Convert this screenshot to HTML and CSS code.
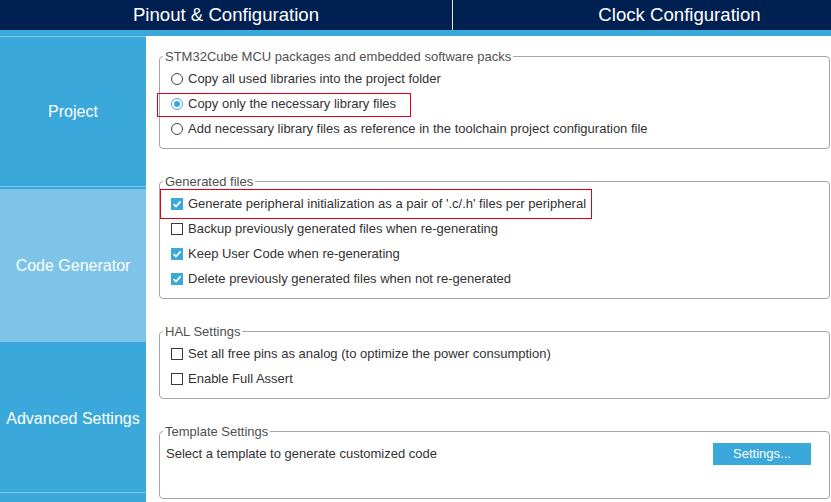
FILE: index.html
```html
<!DOCTYPE html>
<html>
<head>
<meta charset="utf-8">
<link rel="stylesheet" href="styles.css">
</head>
<body>
<div class="app">
  <header class="topbar">
    <div class="tab tab-first">Pinout &amp; Configuration</div>
    <div class="tab">Clock Configuration</div>
  </header>
  <div class="strip"></div>
  <div class="main">
    <nav class="side">
      <div class="nav-item nav-first">Project</div>
      <div class="nav-item nav-active">Code Generator</div>
      <div class="nav-item nav-last">Advanced Settings</div>
    </nav>
    <section class="content">
      <fieldset class="group">
        <legend>STM32Cube MCU packages and embedded software packs</legend>
        <div class="row"><span class="rb"></span><span>Copy all used libraries into the project folder</span></div>
        <div class="row"><span class="rb on"></span><span>Copy only the necessary library files</span><span class="mark mark-1"></span></div>
        <div class="row"><span class="rb"></span><span>Add necessary library files as reference in the toolchain project configuration file</span></div>
      </fieldset>

      <fieldset class="group">
        <legend>Generated files</legend>
        <div class="row"><span class="cb on"><svg width="12" height="12" viewBox="0 0 12 12"><path d="M2.6 6.2 L5 8.6 L9.6 3.4" stroke="#fff" stroke-width="1.7" fill="none"/></svg></span><span>Generate peripheral initialization as a pair of '.c/.h' files per peripheral</span><span class="mark mark-2"></span></div>
        <div class="row"><span class="cb"></span><span>Backup previously generated files when re-generating</span></div>
        <div class="row"><span class="cb on"><svg width="12" height="12" viewBox="0 0 12 12"><path d="M2.6 6.2 L5 8.6 L9.6 3.4" stroke="#fff" stroke-width="1.7" fill="none"/></svg></span><span>Keep User Code when re-generating</span></div>
        <div class="row"><span class="cb on"><svg width="12" height="12" viewBox="0 0 12 12"><path d="M2.6 6.2 L5 8.6 L9.6 3.4" stroke="#fff" stroke-width="1.7" fill="none"/></svg></span><span>Delete previously generated files when not re-generated</span></div>
      </fieldset>

      <fieldset class="group">
        <legend>HAL Settings</legend>
        <div class="row"><span class="cb"></span><span>Set all free pins as analog (to optimize the power consumption)</span></div>
        <div class="row"><span class="cb"></span><span>Enable Full Assert</span></div>
      </fieldset>

      <fieldset class="group group-tpl">
        <legend>Template Settings</legend>
        <div class="row row-tpl"><span>Select a template to generate customized code</span><span class="btn">Settings...</span></div>
      </fieldset>
    </section>
  </div>
</div>
</body>
</html>
```
FILE: styles.css
```css
html, body {
  margin: 0;
  padding: 0;
  background: #ffffff;
  overflow: hidden;
}
.app {
  width: 831px;
  height: 502px;
  overflow: hidden;
  font-family: "Liberation Sans", Arial, sans-serif;
  display: flex;
  flex-direction: column;
}
.topbar {
  height: 30px;
  background: #012052;
  display: flex;
  overflow: hidden;
  flex: none;
}
.tab {
  flex: none;
  width: 453px;
  box-sizing: border-box;
  color: #ffffff;
  font-size: 18.6px;
  line-height: 29px;
  text-align: center;
}
.tab-first {
  border-right: 1px solid #e8ecf2;
}
.strip {
  height: 6px;
  background: #3aa8db;
  flex: none;
}
.main {
  flex: 1;
  display: flex;
  min-height: 0;
}
.side {
  width: 146px;
  flex: none;
  background: #3aa8db;
  display: flex;
  flex-direction: column;
}
.nav-item {
  color: #ffffff;
  font-size: 16px;
  display: flex;
  align-items: center;
  justify-content: center;
  padding-top: 1px;
  box-sizing: border-box;
}
.nav-first {
  height: 151px;
  border-top: 1px solid #86c8ea;
  border-bottom: 1px solid #86c8ea;
  margin-bottom: 2px;
}
.nav-active {
  height: 153px;
  background: #7dc4e8;
}
.nav-last {
  height: 151px;
  padding-top: 3px;
  border-bottom: 1px solid #86c8ea;
}
.content {
  flex: 1;
  padding: 13px 1px 0 13px;
  display: flex;
  flex-direction: column;
  gap: 25px;
  color: #333333;
  font-size: 13px;
}
.group {
  margin: 0;
  min-width: 0;
  border: 1px solid #a3a6aa;
  border-radius: 4px;
  padding: 2px 0 7px 11px;
}
.group legend {
  margin-left: -8px;
  padding: 0 2px;
  font-size: 13px;
  line-height: 15px;
  color: #505050;
}
.group-tpl {
  padding-bottom: 32px;
}
.row {
  position: relative;
  height: 25px;
  display: flex;
  align-items: center;
  gap: 5px;
  line-height: 25px;
  white-space: nowrap;
}
.row-tpl {
  margin-left: -5px;
  justify-content: space-between;
}
.rb, .cb {
  width: 12px;
  height: 12px;
  box-sizing: border-box;
  flex: none;
  position: relative;
}
.rb {
  border: 1px solid #444444;
  border-radius: 50%;
}
.rb.on {
  border-color: #3aa8db;
}
.rb.on::after {
  content: "";
  position: absolute;
  left: 2px;
  top: 2px;
  width: 6px;
  height: 6px;
  border-radius: 50%;
  background: #3aa8db;
}
.cb {
  border: 1px solid #3a3a3a;
  background: #ffffff;
}
.cb.on {
  border: none;
  background: #3aa8db;
}
.cb svg {
  display: block;
}
.mark {
  position: absolute;
  box-sizing: border-box;
  border: 1px solid #e60012;
}
.mark-1 {
  left: -14px;
  top: 2px;
  width: 254px;
  height: 24px;
}
.mark-2 {
  left: -11px;
  top: -2px;
  width: 432px;
  height: 30px;
}
.btn {
  width: 98px;
  height: 22px;
  margin-right: 18px;
  background: #3aa8db;
  color: #ffffff;
  font-size: 13px;
  line-height: 22px;
  text-align: center;
}
```
